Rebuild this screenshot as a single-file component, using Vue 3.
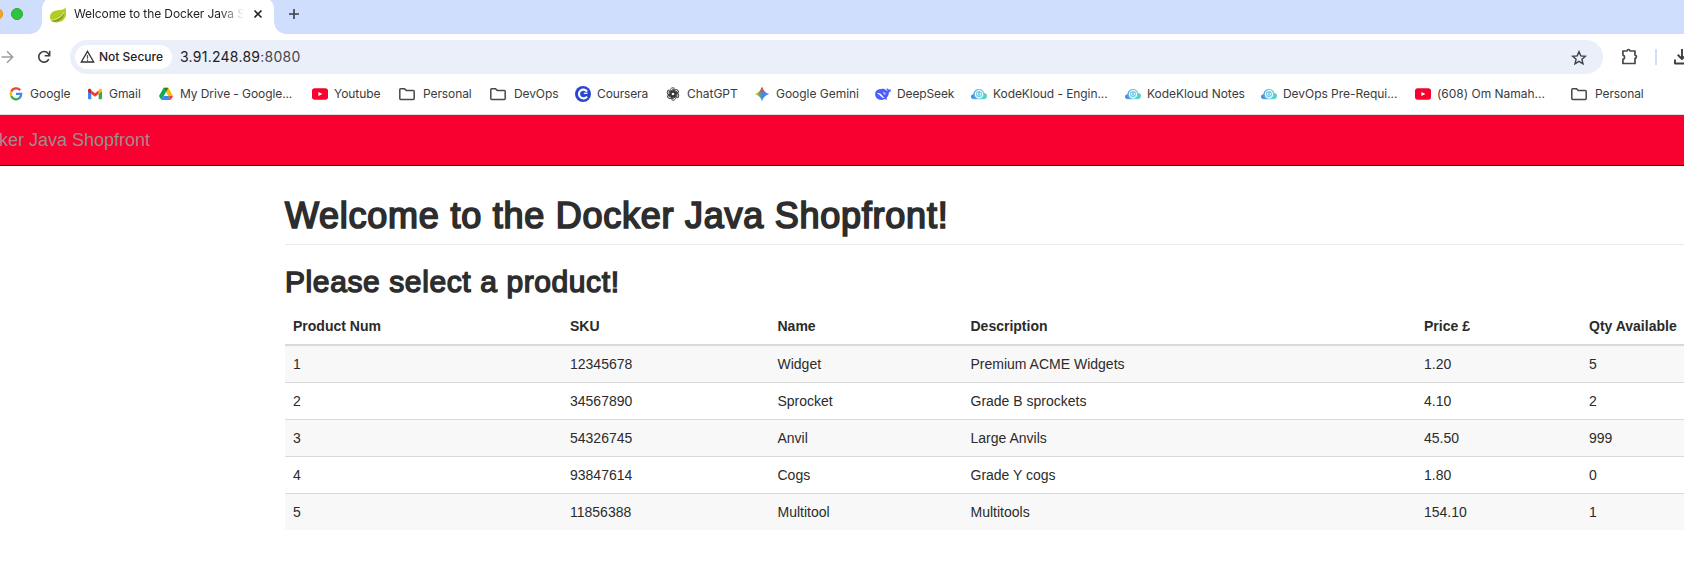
<script setup>
const bookmarks = [
  { label: 'Google', icon: 'google', w: 79, t: 22, ls: 0 },
  { label: 'Gmail', icon: 'gmail', w: 71, t: 22, ls: -0.05 },
  { label: 'My Drive - Google...', icon: 'drive', w: 154, t: 22, ls: -0.09 },
  { label: 'Youtube', icon: 'youtube', w: 87, t: 22, ls: -0.05 },
  { label: 'Personal', icon: 'folder', w: 91, t: 24, ls: -0.1 },
  { label: 'DevOps', icon: 'folder', w: 85, t: 24, ls: -0.1 },
  { label: 'Coursera', icon: 'coursera', w: 90, t: 22, ls: -0.13 },
  { label: 'ChatGPT', icon: 'chatgpt', w: 89, t: 22, ls: -0.03 },
  { label: 'Google Gemini', icon: 'gemini', w: 121, t: 22, ls: -0.03 },
  { label: 'DeepSeek', icon: 'deepseek', w: 96, t: 22, ls: -0.13 },
  { label: 'KodeKloud - Engin...', icon: 'cloud', w: 154, t: 22, ls: -0.07 },
  { label: 'KodeKloud Notes', icon: 'cloud', w: 136, t: 22, ls: -0.04 },
  { label: 'DevOps Pre-Requi...', icon: 'cloud', w: 154, t: 22, ls: -0.04 },
  { label: '(608) Om Namah...', icon: 'youtube', w: 156, t: 22, ls: -0.01 },
  { label: 'Personal', icon: 'folder', w: 90, t: 24, ls: -0.1 },
]
const columns = ['Product Num', 'SKU', 'Name', 'Description', 'Price £', 'Qty Available']
const products = [
  ['1', '12345678', 'Widget', 'Premium ACME Widgets', '1.20', '5'],
  ['2', '34567890', 'Sprocket', 'Grade B sprockets', '4.10', '2'],
  ['3', '54326745', 'Anvil', 'Large Anvils', '45.50', '999'],
  ['4', '93847614', 'Cogs', 'Grade Y cogs', '1.80', '0'],
  ['5', '11856388', 'Multitool', 'Multitools', '154.10', '1'],
]
</script>

<template>
  <div class="window">
    <div class="tabstrip">
      <div class="lights"><i class="yellow"></i><i class="green"></i></div>
      <div class="tab">
        <svg class="leaf" width="17" height="16" viewBox="0 0 17 16">
          <path d="M15.400 0.300C14.600 2.300 13 2.700 9.500 2.900 3.500 3.200 0 5.800 0 9.700c0 2.100.8 3.700 2.200 4.800C5 16 10 15.600 13 13.300c3.600-2.800 3.700-8 2.400-13z" fill="#b4cc22" />
          <path d="M1 13.800C5 12.300 11 12 14.400 5.600c-.2 4-2.400 7-6 8.400C5.500 15.100 3 15 1 13.800z" fill="#7fa31c" />
          <path d="M1.300 13.200C6 12.600 11.500 10.600 14.400 4.800" fill="none" stroke="#e9f3b4" stroke-width=".8" />
        </svg>
        <span class="tab-title">Welcome to the Docker Java S</span>
        <svg class="close" width="10" height="10" viewBox="0 0 10 10"><path d="M1.500 1.500l7 7M8.500 1.500l-7 7" stroke="#202124" stroke-width="1.600" /></svg>
      </div>
      <svg class="plus" width="12" height="12" viewBox="0 0 12 12"><path d="M6 1v10M1 6h10" stroke="#3c4043" stroke-width="1.600" /></svg>
    </div>

    <div class="toolbar">
      <svg class="forward" width="14" height="14" viewBox="0 0 14 14"><path d="M1.500 7h11M7 1.300L12.700 7 7 12.700" fill="none" stroke="#9b9da0" stroke-width="1.500" /></svg>
      <svg class="reload" width="14" height="14" viewBox="0 0 14 14">
        <path d="M11.800 9.200A5.300 5.300 0 1 1 11.400 3.800L12.600 5.100" fill="none" stroke="#3c4043" stroke-width="1.600" />
        <path d="M12.700.8v5H7.700" fill="none" stroke="#3c4043" stroke-width="1.500" />
      </svg>
      <div class="omnibox">
        <div class="chip">
          <svg width="15" height="13" viewBox="0 0 15 13"><path d="M7.500 1.400L13.700 12H1.300z" fill="none" stroke="#303236" stroke-width="1.300" /><path d="M7.500 5v3.700M7.500 9.500V11" stroke="#55575a" stroke-width="1.200" /></svg>
          <span>Not Secure</span>
        </div>
        <span class="url">3.91.248.89<em>:8080</em></span>
        <svg class="star" width="16" height="15" viewBox="0 0 16 15"><path d="M8 1.700l1.800 4.200 4.600.4-3.500 3 1.100 4.500L8 11.400l-4 2.400 1.100-4.500-3.500-3 4.600-.4z" fill="none" stroke="#3c4043" stroke-width="1.400" /></svg>
      </div>
      <svg class="puzzle" width="17" height="17" viewBox="0 0 17 17">
        <path d="M1.900 3h4.200c.2-2 2.700-2 2.900 0h5v4.200c1.900.2 1.900 2.900 0 3.100v5.200H1.900v-4.200c2.300-.5 2.300-3.700 0-4.200z" fill="none" stroke="#46484b" stroke-width="1.700" stroke-linejoin="round" />
      </svg>
      <i class="divider"></i>
      <svg class="download" width="16" height="16" viewBox="0 0 16 16"><path d="M8 0v9.500M3.700 5.800L8 10l4.300-4.200M1 10.500v4h14v-4" fill="none" stroke="#3c4043" stroke-width="1.900" stroke-linejoin="round" /></svg>
    </div>

    <div class="bookmarks">
      <div v-for="(b, i) in bookmarks" :key="i" class="bookmark" :style="{ width: b.w + 'px' }">
        <span class="slot" :style="{ width: b.t + 'px' }">
          <svg v-if="b.icon === 'google'" width="16" height="16" viewBox="0 0 16 16" fill="none" stroke-width="2.300">
            <path d="M12.200 4.200A5.200 5.200 0 0 0 3.300 5.700" stroke="#ea4335" />
            <path d="M3.400 5.500a5.200 5.200 0 0 0 0 5" stroke="#fbbc05" />
            <path d="M3.300 10.300a5.200 5.200 0 0 0 7.900 1.900" stroke="#34a853" />
            <path d="M8 7.800h5.200c0 1.900-.7 3.400-2 4.500" stroke="#4285f4" />
          </svg>
          <svg v-else-if="b.icon === 'gmail'" width="16" height="16" viewBox="0 0 16 16">
            <path d="M1 4v8.200c0 .6.400 1 1 1h2.300V6z" fill="#4285f4" />
            <path d="M15 4v8.200c0 .6-.4 1-1 1h-2.300V6z" fill="#34a853" />
            <path d="M4.300 4.300L8 7.200l3.700-2.900v3.600L8 10.700 4.300 7.900z" fill="#ea4335" />
            <path d="M1 4.300c0-1.600 1.600-2 2.700-1.100l.6.500v4.200L1 5.500z" fill="#c5221f" />
            <path d="M15 4.300c0-1.600-1.600-2-2.700-1.100l-.6.500v4.200L15 5.500z" fill="#fbbc04" />
          </svg>
          <svg v-else-if="b.icon === 'drive'" width="16" height="16" viewBox="0 0 16 16">
            <path d="M5.600 1.800L8 6 3.300 14 1 10z" fill="#0fa958" />
            <path d="M5.600 1.800h4.800L15.100 10h-4.700z" fill="#fbbc04" />
            <path d="M5.600 1.800h4.800L8 6z" fill="#188038" />
            <path d="M5.600 10h4.800l2.400 4H3.300z" fill="#4285f4" />
            <path d="M10.400 10h4.700l-2.300 4z" fill="#ea4335" />
          </svg>
          <svg v-else-if="b.icon === 'youtube'" width="16" height="16" viewBox="0 0 16 16">
            <rect x="0" y="2.300" width="16" height="11.500" rx="2.800" fill="#fa0030" />
            <path d="M6.400 6l4 2-4 2.100z" fill="#fff" />
          </svg>
          <svg v-else-if="b.icon === 'folder'" width="16" height="16" viewBox="0 0 16 16">
            <path d="M.8 3.600c0-.5.300-.8.800-.8h3.900L7.200 4.400h7.200c.5 0 .8.300.8.800v7.400c0 .5-.3.800-.8.800H1.600c-.5 0-.8-.3-.8-.8z" fill="none" stroke="#46484b" stroke-width="1.500" />
          </svg>
          <svg v-else-if="b.icon === 'coursera'" width="16" height="16" viewBox="0 0 16 16">
            <circle cx="8" cy="8" r="8" fill="#2a46cf" />
            <path d="M12 5.500a4.400 4.400 0 1 0 0 5" fill="none" stroke="#fff" stroke-width="2.200" />
            <path d="M12.500 7.300H8.800" stroke="#fff" stroke-width="1.300" />
          </svg>
          <svg v-else-if="b.icon === 'chatgpt'" width="16" height="16" viewBox="0 0 16 16" fill="none" stroke="#303030" stroke-width=".9">
            <g v-for="n in 6" :key="n" :transform="`rotate(${n * 60} 8 8)`">
              <path d="M8 6L11 7.700V11.200a3 3 0 0 1-4.500 2.600" />
              <path d="M5.700 8.800V4.900L9.300 2.800" />
            </g>
          </svg>
          <svg v-else-if="b.icon === 'gemini'" width="16" height="16" viewBox="0 0 16 16">
            <defs>
              <linearGradient id="gem" x1="0" x2="1" y1="0" y2="0"><stop offset=".05" stop-color="#f6bd12" /><stop offset=".35" stop-color="#55ae6b" /><stop offset=".55" stop-color="#4285f4" /></linearGradient>
              <linearGradient id="gemTop" x1="0" x2="0" y1="0" y2="1"><stop offset=".2" stop-color="#f04438" /><stop offset=".45" stop-color="#f04438" stop-opacity="0" /></linearGradient>
            </defs>
            <path d="M8 .7C9.400 4.800 11.200 6.600 15.300 8 11.200 9.400 9.400 11.200 8 15.300 6.600 11.200 4.800 9.400.7 8 4.800 6.600 6.600 4.800 8 .7z" fill="url(#gem)" />
            <path d="M8 .7C9.400 4.800 11.200 6.600 15.300 8 11.200 9.400 9.400 11.200 8 15.300 6.600 11.200 4.800 9.400.7 8 4.800 6.600 6.600 4.800 8 .7z" fill="url(#gemTop)" />
          </svg>
          <svg v-else-if="b.icon === 'deepseek'" width="16" height="16" viewBox="0 0 16 16">
            <path d="M15.900 3.200c-1 .7-1.800.5-2.600.1-.9-.6-1.300-1.100-1.800-1-.2 1.300.7 2 1.400 2.700-1.200-.1-2.300-.9-3.400-1.900C8 2.300 6 2.700 4 3.200 1.500 3.700 0 5.700.1 8.200c.1 3.300 2.800 5.700 6.200 5.700 1.400 0 2.400-.4 3.400-.9.700.5 1.900.8 2.500.3-.5-.5-.6-.8-.7-1.200 1.600-1.600 2.300-3.600 2.400-5.600 1.300-.4 2.100-1.600 2-3.300z" fill="#4d5dff" />
            <path d="M2 7.200c1.900-.7 4.100.6 5.300 2.400.8 1.300 1.500 2 2.300 2.300-2 .3-3-.8-3.900-1.900C4.600 8.800 3.400 8 2 7.200z" fill="#fff" />
            <path d="M8.200 6.800c1 0 1.900.7 1.900 1.700" fill="none" stroke="#fff" stroke-width="1.100" />
          </svg>
          <svg v-else width="16" height="16" viewBox="0 0 16 16">
            <defs><linearGradient id="kk" x1="0" x2="1" y1="0" y2="0"><stop offset="0" stop-color="#3b83da" /><stop offset=".5" stop-color="#6fcbe8" /><stop offset="1" stop-color="#43d9bd" /></linearGradient></defs>
            <path d="M3.200 13.200C1.300 13.200 0 12.400 0 10.800c0-1.500 1-2.300 2.500-2.500C2.600 5 5 3 8 3s4.800 1.700 5.200 4c1.800.2 2.800 1.300 2.800 2.900 0 2-1.500 3.300-3.600 3.300z" fill="url(#kk)" />
            <circle cx="8" cy="8.200" r="3.700" fill="#7bd0ea" stroke="#f0fbfd" stroke-width="1.200" />
            <path d="M7.100 7L6.200 8.200l.9 1.200M8.900 7l.9 1.200-.9 1.200" fill="none" stroke="#fff" stroke-width=".9" />
          </svg>
        </span>
        <span class="label" :style="{ letterSpacing: b.ls + 'px' }">{{ b.label }}</span>
      </div>
    </div>

    <nav class="navbar"><span>ker Java Shopfront</span></nav>

    <main class="content">
      <h1>Welcome to the Docker Java Shopfront!</h1>
      <h2>Please select a product!</h2>
      <div class="table">
        <div class="row head"><b v-for="c in columns" :key="c">{{ c }}</b></div>
        <div v-for="p in products" :key="p[0]" class="row"><span v-for="(v, i) in p" :key="i">{{ v }}</span></div>
      </div>
    </main>
  </div>
</template>

<style>
body { margin: 0; background: #fff; overflow: hidden; }
</style>

<style scoped>
.window { width: 1684px; height: 585px; overflow: hidden; background: #fff; font-family: Inter, "Liberation Sans", sans-serif; color: #3a3b3e; }
.window * { box-sizing: border-box; }
svg { display: block; flex: none; }
.tabstrip { height: 34px; background: #d0defd; display: flex; overflow: hidden; }
.lights { width: 42px; flex: none; display: flex; gap: 8px; padding-top: 8px; margin-left: -9px; }
.lights i { width: 12px; height: 12px; border-radius: 50%; flex: none; }
.yellow { background: #f5a623; border: 1px solid #df9412; }
.green { background: #2dc53f; border: 1px solid #27ac35; }
.tab { position: relative; width: 232px; margin-left: 9px; height: 36px; margin-top: -2px; background: #fff; border-radius: 10px 10px 0 0; display: flex; align-items: center; padding: 0 11px 4px 8px; flex: none; }
.tab::before, .tab::after { content: ""; position: absolute; bottom: 0; width: 12px; height: 12px; }
.tab::before { left: -12px; background: radial-gradient(circle at 0 0, transparent 11.5px, #fff 12px); }
.tab::after { right: -12px; background: radial-gradient(circle at 100% 0, transparent 11.5px, #fff 12px); }
.tab-title { font-size: 12px; letter-spacing: -0.1px; line-height: 16px; color: #1f2023; width: 172px; margin-left: 7px; white-space: nowrap; -webkit-mask-image: linear-gradient(90deg, #000 146px, transparent 170px); mask-image: linear-gradient(90deg, #000 146px, transparent 170px); }
.leaf { margin-top: 1px; }
.close { margin-left: auto; }
.plus { margin: 8px 0 0 14px; }
.toolbar { height: 46px; display: flex; align-items: center; }
.reload { margin-left: 23px; width: 14px; }
.omnibox { width: 1533px; height: 34px; margin-left: 19px; background: #ebeff9; border-radius: 17px; display: flex; align-items: center; flex: none; }
.chip { width: 97px; height: 24px; border-radius: 12px; background: #fff; margin-left: 5px; padding: 0 0 1px 5px; display: flex; align-items: center; gap: 4px; font-size: 12px; line-height: 16px; font-weight: 500; color: #1f2023; white-space: nowrap; flex: none; }
.url { font-size: 14px; line-height: 18px; padding-bottom: 1px; letter-spacing: 0.26px; color: #202124; margin-left: 8px; white-space: nowrap; }
.url em { font-style: normal; color: #46484b; }
.star { margin-left: auto; margin-right: 16px; }
.puzzle { margin-left: 18px; margin-top: -2px; }
.divider { width: 2px; height: 16px; background: #cfdefb; margin-left: 17px; flex: none; }
.download { margin-left: 17px; }
.bookmarks { height: 35px; display: flex; padding-left: 8px; border-bottom: 1px solid #dcdee2; padding-bottom: 6px; }
.bookmark { display: flex; align-items: center; flex: none; height: 28px; }
.slot { flex: none; }
.label { font-size: 12px; line-height: 16px; white-space: nowrap; }
.navbar { height: 51px; background: #f8002f; border-bottom: 1px solid #101010; font: 18px/20px "Liberation Sans", Arial, sans-serif; color: #9d8c8c; padding-top: 15px; white-space: nowrap; }
.navbar span { margin-left: -1px; }
.content { padding-left: 285px; font-family: "Liberation Sans", Arial, sans-serif; color: #2b2b2b; }
h1, h2 { margin: 0; white-space: nowrap; font-weight: 400; color: #2d2d2d; -webkit-text-stroke: 1.7px #2d2d2d; }
h1 { font-size: 36px; line-height: 40px; height: 79px; padding-top: 30px; border-bottom: 1px solid #eaeaea; letter-spacing: 0.75px; }
h2 { font-size: 30px; line-height: 33px; height: 63px; padding-top: 20px; letter-spacing: 0.6px; -webkit-text-stroke-width: 1.4px; }
.row { display: grid; grid-template-columns: 277px 207.500px 193px 453.500px 165px 103px; height: 37px; padding-left: 8px; line-height: 20px; font-size: 14px; align-items: center; border-top: 1px solid #d9d9d9; white-space: nowrap; }
.row.head { height: 38px; border-top: 0; border-bottom: 2px solid #d9d9d9; }
.row.head + .row { border-top: 0; height: 36px; }
.row:nth-child(even) { background: #f8f8f8; }
</style>
